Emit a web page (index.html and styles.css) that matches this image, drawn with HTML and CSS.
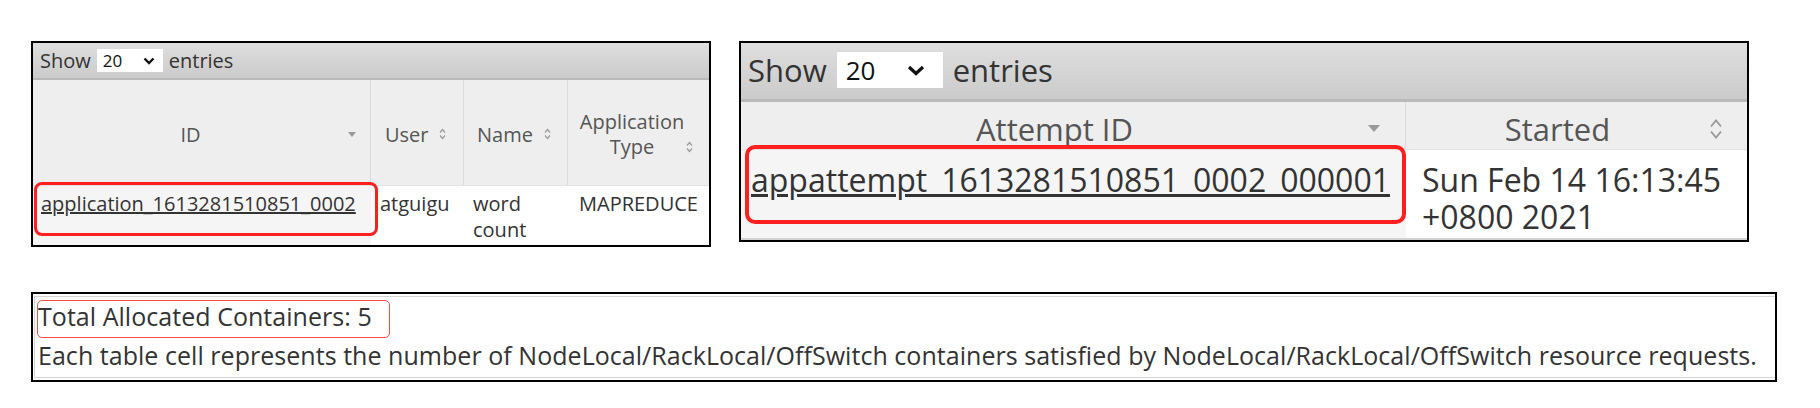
FILE: index.html
```html
<!DOCTYPE html>
<html>
<head>
<meta charset="utf-8">
<title>YARN application</title>
<link rel="stylesheet" href="styles.css">
</head>
<body>
<div class="page">
  <div class="top">
    <section class="panel p1">
      <div class="toolbar">
        <span>Show</span>
        <span class="select"><span>20</span><svg class="chev" width="12" height="8" viewBox="0 0 12 8"><path d="M1.5 1.5L6 6L10.5 1.5" fill="none" stroke="#111" stroke-width="2.4"/></svg></span>
        <span>entries</span>
      </div>
      <div class="grid">
        <div class="th th-id"><span class="lbl">ID</span><svg width="8" height="5" viewBox="0 0 8 5"><path d="M0 0H8L4 5Z" fill="#999"/></svg></div>
        <div class="th th-user"><span>User</span><svg width="7" height="12" viewBox="0 0 7 12"><path d="M1 4.5L3.5 1.5L6 4.5M1 7.5L3.5 10.5L6 7.5" fill="none" stroke="#999" stroke-width="1.2"/></svg></div>
        <div class="th th-name"><span>Name</span><svg width="7" height="12" viewBox="0 0 7 12"><path d="M1 4.5L3.5 1.5L6 4.5M1 7.5L3.5 10.5L6 7.5" fill="none" stroke="#999" stroke-width="1.2"/></svg></div>
        <div class="th th-type"><span class="lbl">Application<br>Type</span><svg class="low" width="7" height="12" viewBox="0 0 7 12"><path d="M1 4.5L3.5 1.5L6 4.5M1 7.5L3.5 10.5L6 7.5" fill="none" stroke="#999" stroke-width="1.2"/></svg></div>
        <div class="td sorted marked"><a href="#">application_1613281510851_0002</a></div>
        <div class="td">atguigu</div>
        <div class="td">word count</div>
        <div class="td">MAPREDUCE</div>
      </div>
    </section>

    <section class="panel p2">
      <div class="toolbar">
        <span>Show</span>
        <span class="select"><span>20</span><svg class="chev" width="18" height="11" viewBox="0 0 18 11"><path d="M2 2L9 8.5L16 2" fill="none" stroke="#111" stroke-width="3.2"/></svg></span>
        <span>entries</span>
      </div>
      <div class="grid">
        <div class="th th-att"><span class="lbl">Attempt ID</span><svg width="12" height="7" viewBox="0 0 12 7"><path d="M0 0H12L6 7Z" fill="#999"/></svg></div>
        <div class="th th-start"><span class="lbl">Started</span><svg width="14" height="22" viewBox="0 0 14 22"><path d="M2 8.5L7 2.5L12 8.5M2 13.5L7 19.5L12 13.5" fill="none" stroke="#999" stroke-width="1.8"/></svg></div>
        <div class="td sorted marked"><a href="#">appattempt_1613281510851_0002_000001</a></div>
        <div class="td">Sun Feb 14 16:13:45 +0800 2021</div>
      </div>
    </section>
  </div>

  <section class="panel p3">
    <div class="box">
      <div class="total">Total Allocated Containers: 5</div>
      <div>Each table cell represents the number of NodeLocal/RackLocal/OffSwitch containers satisfied by NodeLocal/RackLocal/OffSwitch resource requests.</div>
    </div>
  </section>
</div>
</body>
</html>
```

FILE: styles.css
```css
* { box-sizing: border-box; }

body {
  margin: 0;
  background: #fff;
  font-family: "Open Sans", "Noto Sans", sans-serif;
  color: #333;
}

.page {
  padding: 41px 0 0 31px;
}

.top {
  display: flex;
  align-items: flex-start;
  gap: 28px;
}

.panel {
  border: 2px solid #000;
  background: #fff;
}

/* toolbar ("Show N entries") */
.toolbar {
  display: flex;
  align-items: center;
  background: linear-gradient(#dedede, #cbcbcb);
  border-bottom: 2px solid #b9b9b9;
  color: #333;
}

.select {
  display: flex;
  align-items: center;
  justify-content: space-between;
  background: #fff;
  color: #111;
}

.grid {
  display: grid;
}

.th {
  display: flex;
  align-items: center;
  background: #eeeeee;
  color: #555;
  border-right: 1px solid #dcdcdc;
  border-bottom: 1px solid #e2e2e2;
}

.th.th-type,
.th.th-start { border-right: none; }

.th .lbl {
  flex: 1;
  text-align: center;
}

.td {
  background: #fff;
}

.td.sorted {
  background: #f5f5f5;
}

.td a {
  color: #333;
  text-decoration: underline;
}

.marked {
  position: relative;
}

.marked::after {
  content: "";
  position: absolute;
  z-index: 2;
  border: 3px solid #ff1f1f;
  pointer-events: none;
}

/* ---------- panel 1 ---------- */
.p1 {
  width: 680px;
  height: 206px;
  font-size: 20px;
}

.p1 .toolbar {
  height: 37px;
  padding-left: 7px;
  gap: 6px;
}

.p1 .select {
  width: 66px;
  height: 23px;
  padding: 0 8px 0 6px;
  font-size: 17px;
}

.p1 .grid {
  grid-template-columns: 338px 93px 104px 141px;
  grid-template-rows: 106px 59px;
}

.p1 .th {
  line-height: 25px;
  padding-top: 3px;
}

.p1 .th-id { padding-right: 14px; }
.p1 .th-user { padding-left: 14px; gap: 10px; }
.p1 .th-name { padding-left: 13px; gap: 11px; }
.p1 .th-type { padding: 3px 16px 0 10px; }
.p1 .th-type .low { margin-top: 25px; }

.p1 .td {
  padding: 5px 8px 0 9px;
  line-height: 26px;
}

.p1 .td.sorted { padding-left: 8px; }
.p1 .td:last-child { padding-left: 11px; padding-right: 0; }

.p1 .marked::after {
  left: 1px;
  top: -4px;
  width: 338px;
  height: 48px;
  border-radius: 8px;
}

/* ---------- panel 2 ---------- */
.p2 {
  width: 1010px;
  height: 201px;
  font-size: 31px;
}

.p2 .toolbar {
  height: 59px;
  padding: 0 0 2px 7px;
  gap: 10px;
  border-bottom-width: 3px;
}

.p2 .select {
  width: 106px;
  height: 36px;
  padding: 0 18px 0 9px;
  font-size: 26px;
}

.p2 .grid {
  grid-template-columns: 665px 341px;
  grid-template-rows: 48px 90px;
}

.p2 .th {
  padding-top: 6px;
  line-height: 40px;
}

.p2 .th-att { padding-right: 25px; }
.p2 .th-start { padding-right: 24px; }

.p2 .td {
  padding: 11px 8px 0 16px;
  line-height: 37px;
  font-size: 32px;
  border-bottom: 2px solid #d2d2d2;
}

.p2 .td.sorted { padding-left: 10px; }

.p2 .marked::after {
  left: 4px;
  top: -5px;
  width: 653px;
  height: 71px;
  border-width: 4px;
  border-radius: 10px;
}

/* ---------- panel 3 ---------- */
.p3 {
  margin-top: 45px;
  width: 1746px;
  height: 90px;
  font-size: 25px;
  line-height: 39px;
  letter-spacing: 0.04px;
}

.p3 .box {
  margin: 2px 0 2px 1px;
  height: 82px;
  border-top: 1px solid #d4d4d4;
  border-bottom: 1px solid #d4d4d4;
  border-left: 1px solid #d4d4d4;
  padding-left: 3px;
  white-space: nowrap;
  overflow: hidden;
}

.p3 .total {
  position: relative;
}

.p3 .total::after {
  content: "";
  position: absolute;
  left: -1px;
  top: 3px;
  width: 351px;
  height: 36px;
  border: 1px solid #ff4a4a;
  border-radius: 5px;
}
```
